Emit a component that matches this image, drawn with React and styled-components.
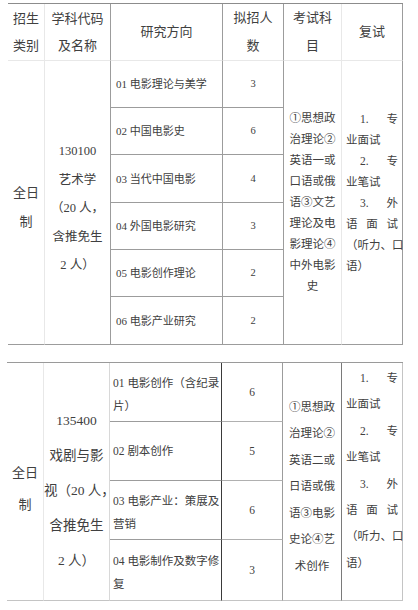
import React from "react";
import styled, { createGlobalStyle } from "styled-components";

const Global = createGlobalStyle`
  html, body { margin: 0; padding: 0; background: #fff; }
  body {
    font-family: "Liberation Serif", "Noto Sans CJK SC", serif;
    color: #404040;
  }
  * { box-sizing: border-box; }
`;

const FAINT = "#e8e8e8";
const MID = "#9c9c9c";
const LIGHT = "#c4c4c4";
const DARK = "#3a3a3a";

const Page = styled.div`
  display: flex;
  flex-direction: column;
  align-items: flex-start;
  gap: 17px;
  padding-top: 3px;
`;

const Table = styled.table`
  border-collapse: separate;
  border-spacing: 0;
  table-layout: fixed;
  margin-left: ${(p) => p.$left}px;
  width: ${(p) => p.$width}px;
  border-top: 1px solid ${(p) => p.$top};
`;

const Col = styled.col`
  width: ${(p) => p.$w}px;
`;

const Row = styled.tr`
  height: ${(p) => p.$h}px;
`;

const Cell = styled.td`
  padding-top: ${(p) => Math.max(p.$shift || 0, 0) * 2}px;
  padding-bottom: ${(p) => Math.max(-(p.$shift || 0), 0) * 2}px;
  padding-left: ${(p) => p.$px ?? 0}px;
  padding-right: ${(p) => p.$px ?? 0}px;
  border-right: 1px solid ${(p) => p.$br || "transparent"};
  border-bottom: 1px solid ${(p) => p.$bb || "transparent"};
  text-align: ${(p) => p.$align || "center"};
  vertical-align: middle;
  font-size: ${(p) => p.$fs || 13}px;
  line-height: ${(p) => p.$lh || 20}px;
  white-space: nowrap;
`;

const Line = styled.div`
  display: ${(p) => (p.$spread ? "flex" : "block")};
  justify-content: space-between;
  padding-left: ${(p) => p.$indent || 0}px;
  height: ${(p) => p.$lh}px;
  line-height: ${(p) => p.$lh}px;
`;

const Lines = ({ items, lh }) => (
  <>
    {items.map((l, i) =>
      Array.isArray(l) ? (
        <Line key={i} $spread $indent={l.indent} $lh={lh}>
          {l.map((s, j) => (
            <span key={j}>{s}</span>
          ))}
        </Line>
      ) : (
        <Line key={i} $lh={lh}>
          {l}
        </Line>
      )
    )}
  </>
);

const spread = (arr, indent) => {
  const a = [...arr];
  a.indent = indent;
  return a;
};

const retest = [
  spread(["1.", "专"], 14),
  "业面试",
  spread(["2.", "专"], 14),
  "业笔试",
  spread(["3.", "外"], 14),
  spread(["语", "面", "试"], 0),
  "（听力、口",
  "语）",
];

const t1Dirs = [
  ["01 电影理论与美学", "3"],
  ["02 中国电影史", "6"],
  ["03 当代中国电影", "4"],
  ["04 外国电影研究", "3"],
  ["05 电影创作理论", "2"],
  ["06 电影产业研究", "2"],
];
const t1Heights = [47, 47, 48, 47, 47, 48];

const t2Dirs = [
  [["01 电影创作（含纪录", "片）"], "6"],
  [["02 剧本创作"], "5"],
  [["03 电影产业：策展及", "营销"], "6"],
  [["04 电影制作及数字修", "复"], "3"],
];
const t2Heights = [59, 59, 59, 61];

export default function App() {
  return (
    <>
      <Global />
      <Page>
        <Table $left={8} $width={395} $top="#8c8c8c">
          <colgroup>
            <Col $w={37} />
            <Col $w={66} />
            <Col $w={112} />
            <Col $w={61} />
            <Col $w={58} />
            <Col $w={61} />
          </colgroup>
          <tbody>
            <Row $h={57}>
              <Cell $br={FAINT} $bb={FAINT}>
                <Lines items={["招生", "类别"]} lh={27} />
              </Cell>
              <Cell $br={MID} $bb={FAINT}>
                <Lines items={["学科代码", "及名称"]} lh={27} />
              </Cell>
              <Cell $br={MID} $bb={FAINT}>研究方向</Cell>
              <Cell $br={MID} $bb={FAINT}>
                <Lines items={["拟招人", "数"]} lh={28} />
              </Cell>
              <Cell $br={FAINT} $bb={FAINT}>
                <Lines items={["考试科", "目"]} lh={28} />
              </Cell>
              <Cell $br={MID} $bb={FAINT}>复试</Cell>
            </Row>
            {t1Dirs.map(([dir, n], i) => (
              <Row key={i} $h={t1Heights[i]}>
                {i === 0 && (
                  <>
                    <Cell rowSpan={6} $br={FAINT} $bb={MID} $fs={13} $shift={4}>
                      <Lines items={["全日", "制"]} lh={29} />
                    </Cell>
                    <Cell rowSpan={6} $br={MID} $bb={MID} $fs={12.5} $shift={6}>
                      <Lines
                        items={["130100", "艺术学", "（20 人，", "含推免生", "2 人）"]}
                        lh={28.5}
                      />
                    </Cell>
                  </>
                )}
                <Cell $br={MID} $bb={MID} $align="left" $px={5} $fs={11}>
                  {dir}
                </Cell>
                <Cell $br={MID} $bb={MID} $fs={10.5}>
                  {n}
                </Cell>
                {i === 0 && (
                  <>
                    <Cell rowSpan={6} $br={FAINT} $bb={MID} $fs={11.5}>
                      <Lines
                        items={[
                          "①思想政",
                          "治理论②",
                          "英语一或",
                          "口语或俄",
                          "语③文艺",
                          "理论及电",
                          "影理论④",
                          "中外电影",
                          "史",
                        ]}
                        lh={21}
                      />
                    </Cell>
                    <Cell
                      rowSpan={6}
                      $br={MID}
                      $bb={MID}
                      $fs={11.5}
                      $align="left"
                      $px={4}
                      $shift={-10}
                    >
                      <Lines items={retest} lh={21} />
                    </Cell>
                  </>
                )}
              </Row>
            ))}
          </tbody>
        </Table>

        <Table $left={7} $width={396} $top="#9a9a9a">
          <colgroup>
            <Col $w={37} />
            <Col $w={66} />
            <Col $w={112} />
            <Col $w={61} />
            <Col $w={59} />
            <Col $w={61} />
          </colgroup>
          <tbody>
            {t2Dirs.map(([dir, n], i) => (
              <Row key={i} $h={t2Heights[i]}>
                {i === 0 && (
                  <>
                    <Cell rowSpan={4} $br={FAINT} $bb={LIGHT} $fs={13} $shift={7}>
                      <Lines items={["全日", "制"]} lh={32} />
                    </Cell>
                    <Cell rowSpan={4} $br="#d8d8d8" $bb={LIGHT} $fs={13.5} $shift={9}>
                      <Lines
                        items={["135400", "戏剧与影", "视（20 人，", "含推免生", "2 人）"]}
                        lh={35}
                      />
                    </Cell>
                  </>
                )}
                <Cell
                  $br={DARK}
                  $bb={i === 3 ? LIGHT : MID}
                  $align="left"
                  $px={3}
                  $fs={11.5}
                  $shift={dir.length > 1 ? 3 : 0}
                >
                  <Lines items={dir} lh={23} />
                </Cell>
                <Cell $br={MID} $bb={i === 3 ? LIGHT : "#b0b0b0"} $fs={11.5}>
                  {n}
                </Cell>
                {i === 0 && (
                  <>
                    <Cell rowSpan={4} $br="#7a7a7a" $bb={LIGHT} $fs={11.5} $shift={5}>
                      <Lines
                        items={[
                          "①思想政",
                          "治理论②",
                          "英语二或",
                          "日语或俄",
                          "语③电影",
                          "史论④艺",
                          "术创作",
                        ]}
                        lh={26.5}
                      />
                    </Cell>
                    <Cell
                      rowSpan={4}
                      $br={LIGHT}
                      $bb={LIGHT}
                      $fs={11.5}
                      $align="left"
                      $px={4}
                      $shift={-11}
                    >
                      <Lines items={retest} lh={26.4} />
                    </Cell>
                  </>
                )}
              </Row>
            ))}
          </tbody>
        </Table>
      </Page>
    </>
  );
}
